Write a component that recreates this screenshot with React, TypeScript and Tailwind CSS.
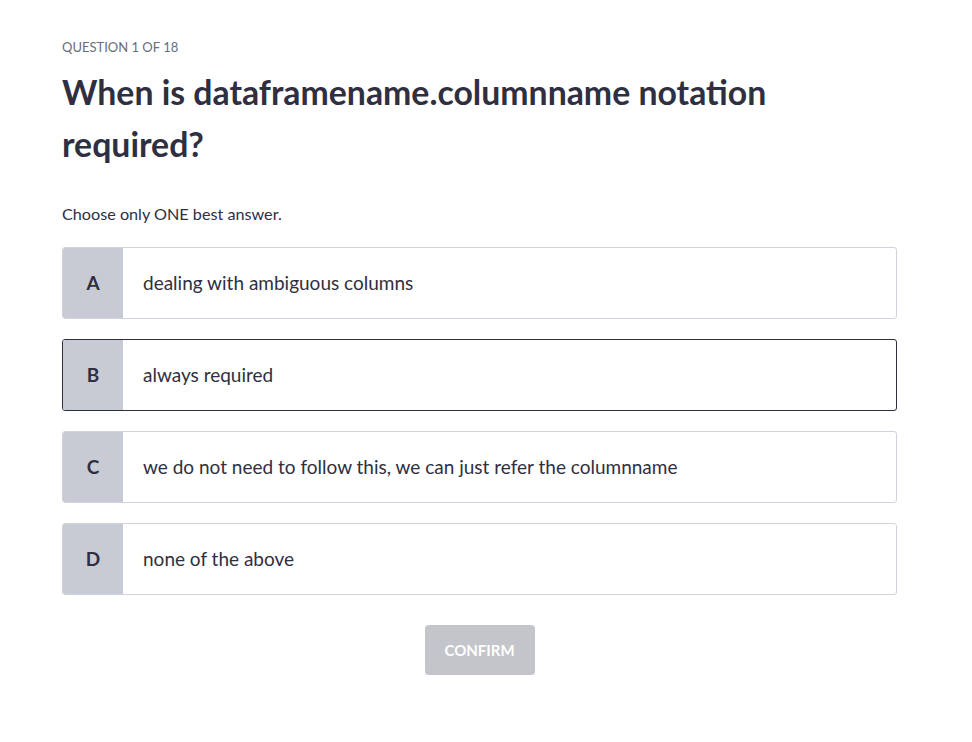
import React from "react";

const options = [
  { letter: "A", text: "dealing with ambiguous columns", selected: false },
  { letter: "B", text: "always required", selected: true },
  { letter: "C", text: "we do not need to follow this, we can just refer the columnname", selected: false },
  { letter: "D", text: "none of the above", selected: false },
];

export default function App() {
  return (
    <div className="min-h-screen bg-white" style={{ fontFamily: "Lato, 'Open Sans', sans-serif" }}>
      <div className="w-[835px] ml-[62px] pt-[38px]">
        <div className="text-[13px] leading-[18px] text-[#6b6c7a] uppercase">Question 1 of 18</div>
        <h1 className="mt-[10px] text-[33.8px] leading-[52px] font-bold text-[#2f2f41] w-[760px]">
          When is dataframename.columnname notation required?
        </h1>
        <p className="mt-[34px] text-[16.2px] leading-[20px] text-[#2f2f41]">Choose only ONE best answer.</p>
        <div className="mt-[23px] flex flex-col gap-[20px]">
          {options.map((o) => (
            <div
              key={o.letter}
              className={
                o.selected
                  ? "flex h-[72px] rounded-[3px] border border-[#2f2f41] overflow-hidden bg-white"
                  : "flex h-[72px] rounded-[3px] border border-[#d1d2dc] overflow-hidden bg-white"
              }
            >
              <div className="w-[60px] bg-[#c9cbd4] flex items-center justify-center text-[19px] font-bold text-[#2f2f41]">
                {o.letter}
              </div>
              <div className="flex items-center pl-[20px] text-[19px] text-[#2f2f41]">{o.text}</div>
            </div>
          ))}
        </div>
        <div className="flex justify-center mt-[30px]">
          <button className="w-[110px] h-[50px] rounded-[4px] bg-[#c4c5cb] text-white font-bold text-[15px] uppercase">
            Confirm
          </button>
        </div>
      </div>
    </div>
  );
}
